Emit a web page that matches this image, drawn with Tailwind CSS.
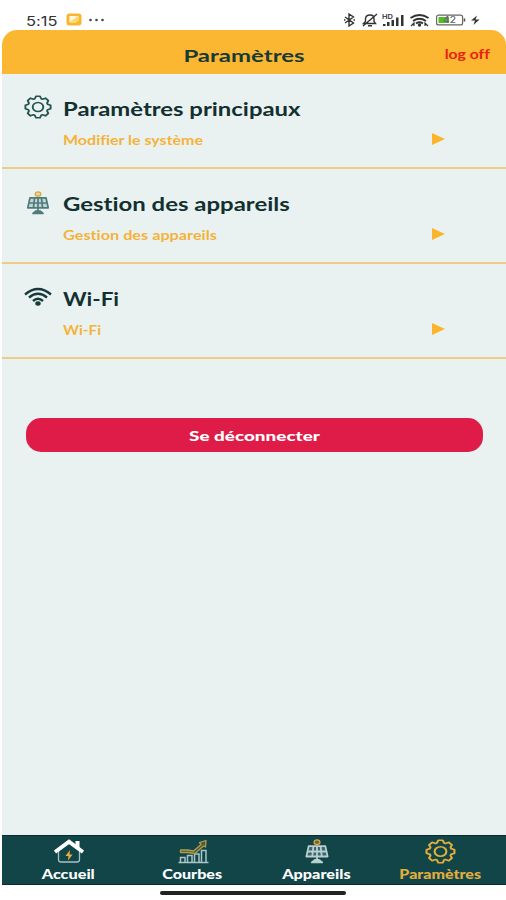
<!DOCTYPE html>
<html lang="fr">
<head>
  <meta charset="UTF-8">
  <meta name="viewport" content="width=device-width, initial-scale=1.0">
  <title>Paramètres</title>
  <script src="https://cdn.jsdelivr.net/npm/@tailwindcss/browser@4"></script>
</head>
<body class="bg-white font-['Lato',sans-serif] font-bold [font-variant-ligatures:none]">
  <!-- Shared icons -->
  <svg class="hidden">
    <symbol id="gear" viewBox="-14 -14 28 28" preserveAspectRatio="none">
      <g fill="none" stroke="currentColor" stroke-width="1.900" stroke-linejoin="round">
        <path d="M-3.200-9.600L-2-12.600H2L3.200-9.600 4.500-9.050 7.500-10.300 10.300-7.500 9.050-4.500 9.600-3.200 12.600-2V2L9.600 3.200 9.050 4.500 10.300 7.500 7.500 10.300 4.500 9.050 3.200 9.600 2 12.600H-2L-3.200 9.600-4.500 9.050-7.500 10.300-10.300 7.500-9.050 4.500-9.600 3.200-12.600 2V-2L-9.600-3.200-9.050-4.500-10.300-7.500-7.500-10.300-4.500-9.050z"/>
        <circle r="5.300"/>
      </g>
    </symbol>
    <symbol id="solar" viewBox="0 0 24 24">
      <ellipse cx="12" cy="3" rx="2.800" ry="2.200" fill="#dfa63c" fill-opacity=".4" stroke="#dfa63c" stroke-width="1.300"/>
      <g fill="none" stroke="currentColor" stroke-width="1.700" stroke-linejoin="round">
        <path d="M4 6.800h16l2.200 10H1.800z" fill="currentColor" fill-opacity=".25"/>
        <path d="M3 12h18M8.500 7l-1 9.500M12 7v9.500M15.500 7l1 9.500M12 17v3.500"/>
        <path d="M7 22.500l3-2.500h4l3 2.500z" fill="currentColor"/>
      </g>
    </symbol>
  </svg>

  <div class="flex h-[900px] w-[506px] flex-col overflow-hidden pl-[2px]">
    <!-- Status bar -->
    <div class="flex h-[30px] shrink-0 items-center pt-[9px] pl-[24px] text-[#333]">
      <span class="w-[32px] shrink-0"><span class="inline-block origin-left scale-x-[1.220] font-['Inter',sans-serif] text-[13.500px] font-normal">5:15</span></span>
      <svg class="ml-[8px] h-[13px] w-[16px]" viewBox="0 0 16 13">
        <rect x=".5" y=".5" width="15" height="12" rx="3" fill="#fbb52c"/>
        <path d="M3.500 3h9.500v4L10 10H3.500z" fill="#ffd977"/>
        <path d="M3.500 9V3H12z" fill="#fff6dc"/>
      </svg>
      <svg class="ml-[7px] h-[4px] w-[16px]" viewBox="0 0 16 4" fill="#444">
        <circle cx="1.500" cy="2" r="1.300"/><circle cx="7.500" cy="2" r="1.300"/><circle cx="13.500" cy="2" r="1.300"/>
      </svg>
      <svg class="ml-[239px] h-[14px] w-[140px]" viewBox="0 0 140 14" fill="none" stroke="#333" stroke-width="1.400">
        <!-- bluetooth -->
        <path d="M1 4l8.500 6-4.500 3V1l4.500 3L1 10M0 7h1.500M9.500 7H11"/>
        <!-- muted bell -->
        <path d="M19.500 10.500h12l-1.500-2V5.500Q30 2 26 2t-4.500 3.500v3zM24 12.800h4M19 13L33 1"/>
        <!-- signal -->
        <g stroke="none" fill="#333">
          <rect x="43" y="9" width="2.500" height="4"/><rect x="47.500" y="7" width="2.500" height="6"/><rect x="52" y="4.500" width="2.500" height="8.500"/><rect x="57" y="2" width="2.500" height="11"/>
          <rect x="39" y="11" width="2.500" height="2"/>
          <text x="38" y="6" font-size="6" font-family="Inter" font-weight="600" textLength="11" lengthAdjust="spacingAndGlyphs">HD</text>
        </g>
        <!-- wifi -->
        <path d="M66.500 5Q75.500-1 84.500 5M69 8Q75.500 3.500 82 8M72 10.500Q75.500 8 79 10.500" stroke-width="1.900"/>
        <path d="M67 13l3-3v3M84 13l-3-3v3" stroke-width="1.200"/>
        <circle cx="75.500" cy="12" r="1" fill="#333"/>
        <!-- battery -->
        <rect x="92.600" y="2.100" width="26" height="9.800" rx="2" stroke="#666" stroke-width="1.200"/>
        <rect x="94.500" y="4" width="10.500" height="6" fill="#54bd25" stroke="none"/>
        <path d="M120.500 5.500v3" stroke="#555" stroke-width="1.600"/>
        <text x="99" y="10" font-size="8.500" font-family="Inter" font-weight="500" fill="#667" stroke="none" textLength="13" lengthAdjust="spacingAndGlyphs">42</text>
        <path d="M133 2.500l-6 5h4l-1.500 4.500 6-5.500h-4z" fill="#333" stroke="none"/>
      </svg>
    </div>

    <!-- Header -->
    <header class="grid h-[44px] shrink-0 grid-cols-[1fr_auto_1fr] items-center rounded-t-[15px] bg-[#fbb632] pt-[7px] pr-[16px]">
      <h1 class="col-start-2 mr-[5px] scale-x-[1.410] text-[17px] text-[#173a35]">Paramètres</h1>
      <a href="#" class="origin-right scale-x-[1.260] justify-self-end text-[12.500px] text-[#e8200c]">log off</a>
    </header>

    <!-- Settings -->
    <main class="flex-1 bg-[#e9f2f1]">
      <section class="flex h-[95px] border-b-2 border-[#efcc85] pt-[21px] pl-[21px] text-[#12302f]">
        <svg class="mr-[1px] ml-[1px] h-[24px] w-[28px] shrink-0 text-[#235651]"><use href="#gear"/></svg>
        <div class="ml-[10px] w-[370px]">
          <h2 class="w-fit origin-left scale-x-[1.325] text-[18px]/[28px]">Paramètres principaux</h2>
          <div class="mt-[8px] flex items-center justify-between text-[#f5b33a]">
            <a href="#" class="origin-left scale-x-[1.280] text-[12.500px]/[20px]">Modifier le système</a>
            <svg class="-mt-[4px] mr-[-12px] h-[12px] w-[13px]" viewBox="0 0 13 12"><path d="M0 0v12l13-6z" fill="#fbb42b"/></svg>
          </div>
        </div>
      </section>

      <section class="flex h-[95px] border-b-2 border-[#efcc85] pt-[21px] pl-[21px] text-[#12302f]">
        <svg class="mt-[1px] mr-[3px] ml-[3px] h-[24px] w-[24px] shrink-0 text-[#4f7b7b]"><use href="#solar"/></svg>
        <div class="ml-[10px] w-[370px]">
          <h2 class="w-fit origin-left scale-x-[1.330] text-[18px]/[28px]">Gestion des appareils</h2>
          <div class="mt-[8px] flex items-center justify-between text-[#f5b33a]">
            <a href="#" class="origin-left scale-x-[1.300] text-[12.500px]/[20px]">Gestion des appareils</a>
            <svg class="-mt-[4px] mr-[-12px] h-[12px] w-[13px]" viewBox="0 0 13 12"><path d="M0 0v12l13-6z" fill="#fbb42b"/></svg>
          </div>
        </div>
      </section>

      <section class="flex h-[95px] border-b-2 border-[#efcc85] pt-[21px] pl-[21px] text-[#12302f]">
        <svg class="mt-[2px] h-[20px] w-[30px] shrink-0" viewBox="0 0 30 20" fill="none" stroke="#173b3a" stroke-width="2.400">
          <path d="M2 7.500Q15-3.500 28 7.500M6 10.500Q15 3 24 10.500M10 14Q15 9.500 20 14"/>
          <ellipse cx="15" cy="16.500" rx="2.700" ry="2.200" fill="#173b3a" stroke="none"/>
        </svg>
        <div class="ml-[10px] w-[370px]">
          <h2 class="w-fit origin-left scale-x-[1.250] text-[18px]/[28px]">Wi-Fi</h2>
          <div class="mt-[8px] flex items-center justify-between text-[#f5b33a]">
            <a href="#" class="origin-left scale-x-[1.220] text-[12.500px]/[20px]">Wi-Fi</a>
            <svg class="-mt-[4px] mr-[-12px] h-[12px] w-[13px]" viewBox="0 0 13 12"><path d="M0 0v12l13-6z" fill="#fbb42b"/></svg>
          </div>
        </div>
      </section>

      <button class="mt-[59px] ml-[24px] flex h-[34px] w-[457px] items-center justify-center rounded-[15px] bg-[#df1c47] text-white">
        <span class="scale-x-[1.350] text-[14px] font-black">Se déconnecter</span>
      </button>
    </main>

    <!-- Bottom navigation -->
    <nav class="flex h-[50px] shrink-0 border-y border-[#0a2c30] bg-[#124548] pl-[4.500px] text-[13px] font-black text-white">
      <a href="#" class="flex w-[124px] flex-col items-center pt-[3px]">
        <svg class="h-[25px] w-[32px]" viewBox="0 0 32 25" fill="none">
          <path d="M5.500 12v8.500q0 2.500 2.500 2.500h16q2.500 0 2.500-2.500V12L16 4.500z" stroke="#a9c4c5" stroke-width="1.300"/>
          <path d="M2 13L16 2.500 30 13" stroke="#fff" stroke-width="3.500"/>
          <path d="M22.500 2h4v7l-4-3z" fill="#fff"/>
          <path d="M17 11l-4.500 6h3l-.500 4.500 4.500-6h-3z" fill="#f0b03a"/>
        </svg>
        <span class="scale-x-[1.250] leading-[20px]">Accueil</span>
      </a>
      <a href="#" class="flex w-[124px] flex-col items-center pt-[3px]">
        <svg class="h-[25px] w-[32px]" viewBox="0 0 32 25" fill="none" stroke="#a9c4c5" stroke-width="1.500">
          <path d="M1.500 23.500h30M3.500 23v-4.500H8V23M10.500 23v-6.500H15V23M17.500 23v-8H22v8M24.500 23V11.500H29V23"/>
          <path d="M3.500 11h7l6 1L24 5.500l-1.500-2 6.500-2-.5 6.500-2-1L18 14.500l-7-1H3.500z" stroke="#b59a45" stroke-width="1.300" fill="#b59a45" fill-opacity=".3" stroke-linejoin="round"/>
        </svg>
        <span class="scale-x-[1.240] leading-[20px]">Courbes</span>
      </a>
      <a href="#" class="flex w-[124px] flex-col items-center pt-[3px]">
        <svg class="h-[25px] w-[26px] text-[#b9d0d1]"><use href="#solar"/></svg>
        <span class="scale-x-[1.250] leading-[20px]">Appareils</span>
      </a>
      <a href="#" class="flex w-[124px] flex-col items-center pt-[3px] text-[#e3ae3c]">
        <svg class="h-[25px] w-[31px]"><use href="#gear"/></svg>
        <span class="scale-x-[1.230] leading-[20px]">Paramètres</span>
      </a>
    </nav>

    <!-- Home indicator -->
    <div class="h-[15px] shrink-0 pt-[6px] pl-[158px]">
      <div class="h-[4px] w-[186px] rounded-full bg-[#222]"></div>
    </div>
  </div>
</body>
</html>
